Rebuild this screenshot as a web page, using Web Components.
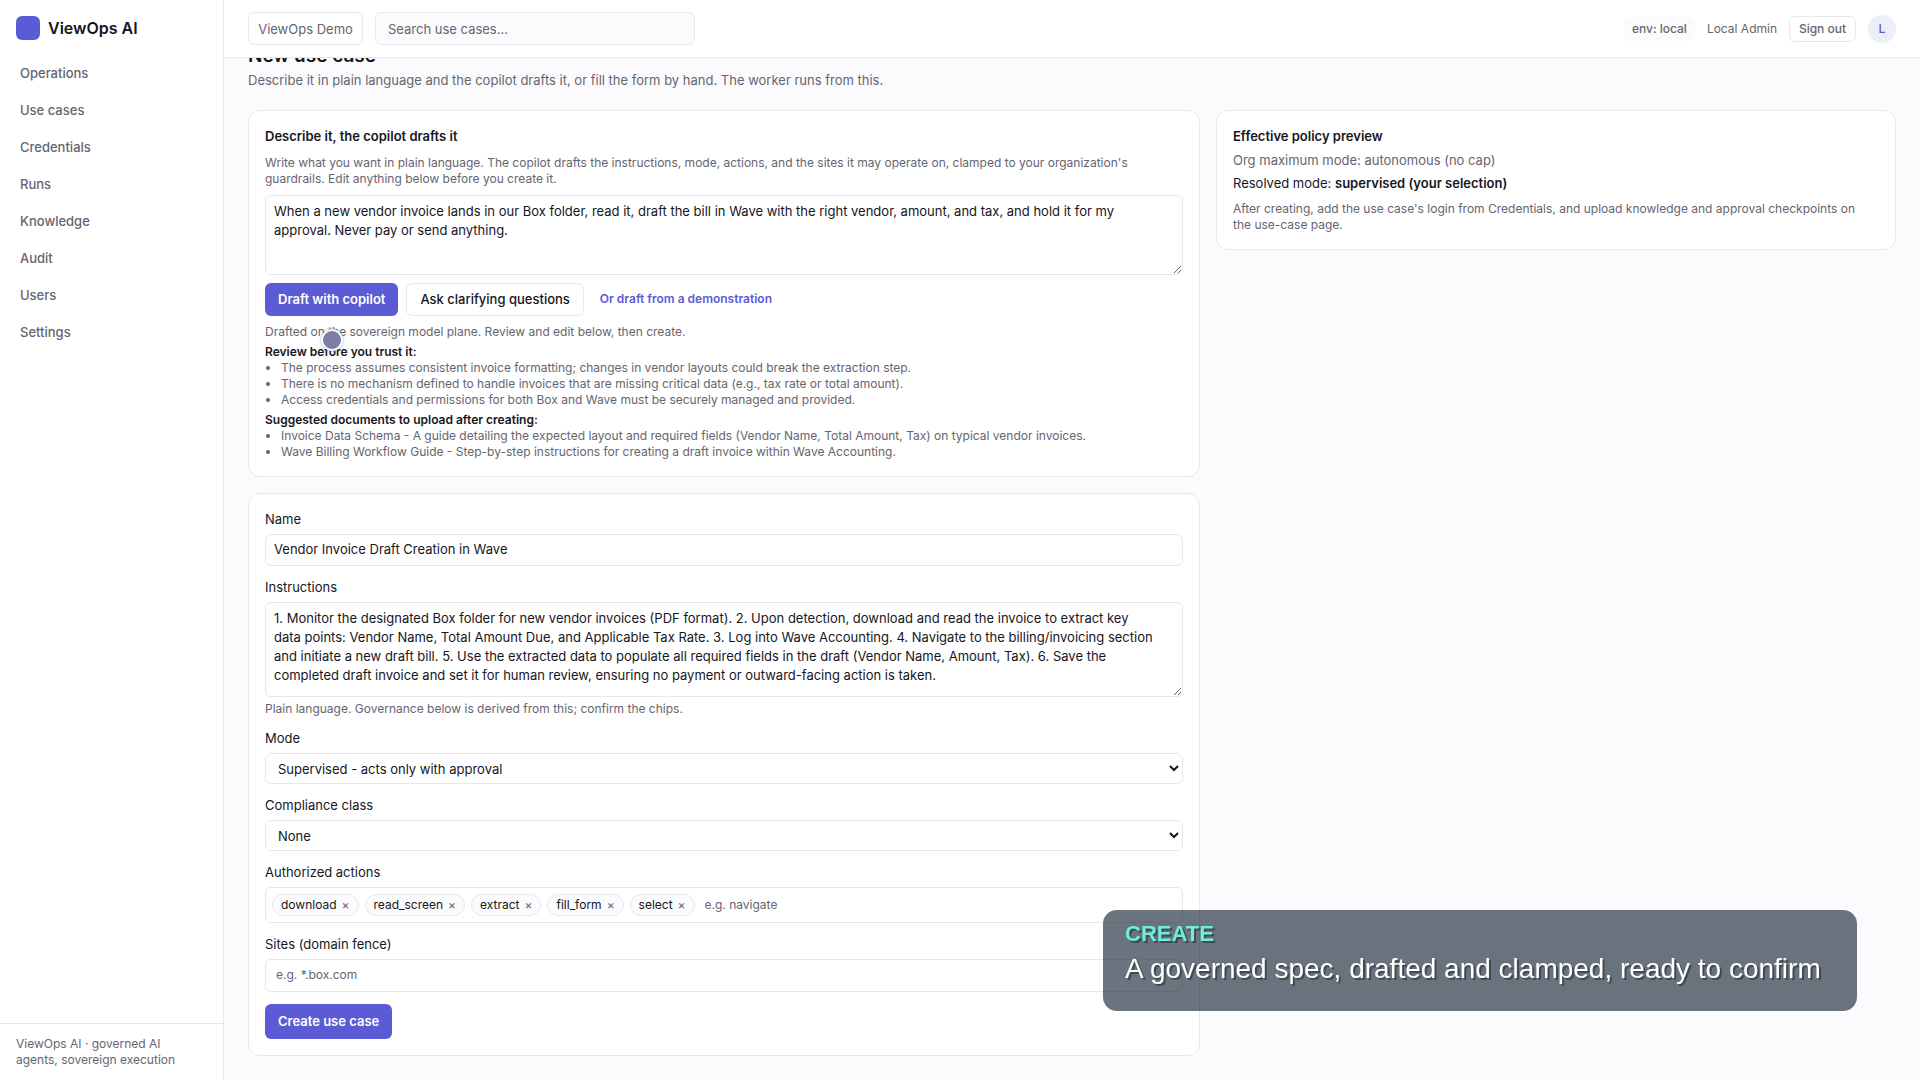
<!DOCTYPE html>
<html lang="en">
<head>
<meta charset="utf-8">
<title>ViewOps AI - New use case</title>
<style>
  :root {
    --accent: #5b5bd6;
    --accent-soft: #eeeefb;
    --ink: #16161d;
    --muted: #65656f;
    --line: #e8e8ec;
    --canvas: #fbfbfe;
    --surface: #ffffff;
    --field: 1px solid var(--line);
  }
  html, body { height: 100%; }
  body {
    margin: 0;
    font: 400 13px/20px Inter, "Liberation Sans", sans-serif;
    color: var(--ink);
    background: var(--canvas);
  }
</style>
</head>
<body>
<vo-shell>
  <vo-sidebar slot="sidebar"></vo-sidebar>
  <vo-topbar slot="topbar"></vo-topbar>
  <vo-page heading="New use case" summary="Describe it in plain language and the copilot drafts it, or fill the form by hand. The worker runs from this.">
    <vo-copilot-card></vo-copilot-card>
    <vo-card>
      <vo-stack>
        <vo-text-field label="Name" value="Vendor Invoice Draft Creation in Wave"></vo-text-field>
        <vo-text-field label="Instructions" multiline hint="Plain language. Governance below is derived from this; confirm the chips." value="1. Monitor the designated Box folder for new vendor invoices (PDF format). 2. Upon detection, download and read the invoice to extract key data points: Vendor Name, Total Amount Due, and Applicable Tax Rate. 3. Log into Wave Accounting. 4. Navigate to the billing/invoicing section and initiate a new draft bill. 5. Use the extracted data to populate all required fields in the draft (Vendor Name, Amount, Tax). 6. Save the completed draft invoice and set it for human review, ensuring no payment or outward-facing action is taken."></vo-text-field>
        <vo-select-field label="Mode" value="Supervised - acts only with approval"></vo-select-field>
        <vo-select-field label="Compliance class" value="None"></vo-select-field>
        <vo-chip-field label="Authorized actions" chips="download,read_screen,extract,fill_form,select" placeholder="e.g. navigate"></vo-chip-field>
        <vo-chip-field label="Sites (domain fence)" placeholder="e.g. *.box.com"></vo-chip-field>
        <vo-button primary large>Create use case</vo-button>
      </vo-stack>
    </vo-card>
    <vo-policy-card slot="aside"></vo-policy-card>
  </vo-page>
</vo-shell>
<vo-pointer></vo-pointer>
<vo-caption kicker="CREATE">A governed spec, drafted and clamped, ready to confirm</vo-caption>

<script>
const define = (name, render, after) => customElements.define(name, class extends HTMLElement {
  connectedCallback() {
    if (this.shadowRoot) return;
    const root = this.attachShadow({ mode: 'open' });
    const tpl = document.createElement('template');
    tpl.innerHTML = '<style>*{box-sizing:border-box}:host{display:block;box-sizing:border-box}</style>' + render(this);
    root.append(tpl.content.cloneNode(true));
    if (after) after(this, root);
  }
});

define('vo-shell', () => `
  <style>
    :host { display: grid; grid-template-columns: 224px minmax(0, 1fr); height: 100vh; }
    .column { display: flex; flex-direction: column; min-height: 0; }
    main { flex: 1; min-height: 0; overflow-y: auto; scrollbar-width: none; }
  </style>
  <slot name="sidebar"></slot>
  <div class="column">
    <slot name="topbar"></slot>
    <main><slot></slot></main>
  </div>`);

define('vo-sidebar', () => `
  <style>
    :host { display: flex; flex-direction: column; background: var(--surface); border-right: var(--field); }
    .brand { display: flex; align-items: center; gap: 8px; padding: 16px 16px 15px; font-size: 16px; line-height: 24px; font-weight: 600; }
    .mark { width: 24px; height: 24px; border-radius: 6px; background: var(--accent); }
    nav { flex: 1; display: flex; flex-direction: column; gap: 1px; padding: 0 8px; }
    a { display: block; padding: 8px 12px; border-radius: 8px; color: var(--muted); font-weight: 500; text-decoration: none; }
    footer { border-top: var(--field); padding: 12px 32px 12px 16px; font-size: 12px; line-height: 16px; color: var(--muted); }
  </style>
  <div class="brand"><span class="mark"></span><span>ViewOps AI</span></div>
  <nav>${['Operations', 'Use cases', 'Credentials', 'Runs', 'Knowledge', 'Audit', 'Users', 'Settings']
    .map(t => `<a href="#">${t}</a>`).join('')}</nav>
  <footer>ViewOps AI · governed AI agents, sovereign execution</footer>`);

define('vo-topbar', () => `
  <style>
    :host { display: flex; align-items: center; gap: 12px; padding: 12px 24px; background: var(--surface);
            border-bottom: var(--field); color: var(--muted); }
    .org, input { height: 33px; border: var(--field); border-radius: 6px; font: inherit; color: inherit; }
    .org { min-width: 115px; background: var(--surface); padding: 0 8px; }
    input { width: 320px; padding: 0 12px; background: var(--canvas); }
    input::placeholder { color: var(--muted); opacity: 1; }
    .side { margin-left: auto; display: flex; align-items: center; gap: 12px; font-size: 12px; line-height: 16px; }
    .env { padding: 4px 8px; border-radius: 6px; background: var(--canvas); font-weight: 500; }
    .out { height: 26px; min-width: 67px; padding: 0 8px; border: var(--field); border-radius: 6px; background: var(--surface);
           font: inherit; font-weight: 500; color: inherit; }
    .avatar { width: 28px; height: 28px; border-radius: 50%; display: grid; place-items: center;
              background: var(--accent-soft); color: var(--accent); font-weight: 500; }
  </style>
  <button class="org">ViewOps Demo</button>
  <input type="search" aria-label="Search" placeholder="Search use cases...">
  <div class="side">
    <span class="env">env: local</span><span>Local Admin</span>
    <button class="out">Sign out</button><span class="avatar">L</span>
  </div>`);

define('vo-page', host => `
  <style>
    :host { padding: 24px; }
    h1 { margin: 0 0 3px; font-size: 19px; line-height: 22px; font-weight: 600; }
    p { margin: 0 0 20px; color: var(--muted); }
    .grid { display: grid; grid-template-columns: minmax(0, 7fr) minmax(0, 5fr); gap: 16px; align-items: start; }
    .col { display: grid; gap: 16px; }
  </style>
  <h1>${host.getAttribute('heading')}</h1>
  <p>${host.getAttribute('summary')}</p>
  <div class="grid">
    <div class="col"><slot></slot></div>
    <slot name="aside"></slot>
  </div>`);

define('vo-card', () => `
  <style>:host { background: var(--surface); border: var(--field); border-radius: 12px; padding: 16px; }</style>
  <slot></slot>`);

define('vo-stack', () => `
  <style>:host { display: grid; gap: 12px; justify-items: stretch; }</style><slot></slot>`);

define('vo-button', host => `
  <style>
    :host { display: flex; }
    button { height: ${host.hasAttribute('large') ? 35 : 33}px; padding: 0 13px 2px; border: var(--field); border-radius: 6px;
             background: var(--surface); color: var(--ink); font: inherit; font-weight: 500; }
    :host([primary]) button { background: var(--accent); border: 0; color: #fff; font-weight: 600; }
  </style>
  <button type="button"><slot></slot></button>`);

const fieldStyles = `<style>
  :host { display: flex; flex-direction: column; gap: 4px; }
  label { line-height: 18px; padding-bottom: 2px; }
  input, textarea, select { width: 100%; border: var(--field); border-radius: 6px; background: var(--surface);
    color: var(--ink); font: inherit; }
  small { font-size: 12px; line-height: 16px; color: var(--muted); }
</style>`;

define('vo-text-field', host => `${fieldStyles}
  <style>
    input { height: 32px; padding: 0 8px 2px; }
    textarea { display: block; height: 95px; padding: 6px 26px 6px 8px; line-height: 19px; resize: vertical; }
  </style>
  <label for="c">${host.getAttribute('label')}</label>
  ${host.hasAttribute('multiline') ? '<textarea id="c"></textarea>' : '<input id="c" type="text">'}
  ${host.hasAttribute('hint') ? `<small>${host.getAttribute('hint')}</small>` : ''}`,
  (host, root) => { root.getElementById('c').value = host.getAttribute('value'); });

define('vo-select-field', host => `${fieldStyles}
  <style>select { height: 31px; padding: 0 8px; }</style>
  <label for="c">${host.getAttribute('label')}</label>
  <select id="c"><option>${host.getAttribute('value')}</option></select>`);

define('vo-chip-field', host => {
  const chips = (host.getAttribute('chips') || '').split(',').filter(Boolean);
  return `${fieldStyles}
  <style>
    .box { display: flex; align-items: center; gap: 6px; min-height: 33px; padding: 6px; border: var(--field); border-radius: 6px;
           font-size: 12px; line-height: 16px; }
    .chip { display: flex; align-items: center; gap: 5px; height: 22px; padding: 0 8px; border: var(--field);
            border-radius: 11px; background: var(--canvas); }
    .chip button { padding: 0; border: 0; background: none; font: inherit; color: var(--muted); }
    input { flex: 1; width: auto; min-width: 0; height: 18px; border: 0; padding: 0 4px 2px; background: none; }
    input::placeholder { color: var(--muted); opacity: 1; }
  </style>
  <label for="c">${host.getAttribute('label')}</label>
  <div class="box">
    ${chips.map(c => `<span class="chip">${c}<button type="button" aria-label="Remove ${c}">×</button></span>`).join('')}
    <input id="c" type="text" placeholder="${host.getAttribute('placeholder')}">
  </div>`;
});

define('vo-notes', host => `
  <style>
    :host { font-size: 12px; line-height: 16px; margin-top: 4px; }
    b { display: block; font-weight: 600; }
    ::slotted(ul) { margin: 0; padding-left: 16px; color: var(--muted); }
  </style>
  <b>${host.getAttribute('label')}</b><slot></slot>`);

define('vo-copilot-card', () => `
  <style>
    h2 { margin: 0 0 10px; font-size: 13px; line-height: 18px; font-weight: 600; }
    p { margin: 0; font-size: 12px; line-height: 16px; color: var(--muted); }
    textarea { display: block; width: 100%; height: 80px; margin: 8px 0; padding: 6px 8px; border: var(--field);
               border-radius: 6px; background: var(--surface); color: var(--ink); font: inherit; line-height: 19px; resize: vertical; }
    .actions { display: flex; align-items: center; gap: 8px; margin-bottom: 8px; }
    a { padding: 0 8px 2px; font-size: 12px; line-height: 16px; font-weight: 600; color: var(--accent); text-decoration: none; }
  </style>
  <vo-card>
    <h2 id="t">Describe it, the copilot drafts it</h2>
    <p>Write what you want in plain language. The copilot drafts the instructions, mode, actions, and the sites it may operate on, clamped to your organization's guardrails. Edit anything below before you create it.</p>
    <textarea aria-labelledby="t">When a new vendor invoice lands in our Box folder, read it, draft the bill in Wave with the right vendor, amount, and tax, and hold it for my approval. Never pay or send anything.</textarea>
    <div class="actions">
      <vo-button primary>Draft with copilot</vo-button>
      <vo-button>Ask clarifying questions</vo-button>
      <a href="#">Or draft from a demonstration</a>
    </div>
    <p>Drafted on the sovereign model plane. Review and edit below, then create.</p>
    <vo-notes label="Review before you trust it:"><ul>
      <li>The process assumes consistent invoice formatting; changes in vendor layouts could break the extraction step.</li>
      <li>There is no mechanism defined to handle invoices that are missing critical data (e.g., tax rate or total amount).</li>
      <li>Access credentials and permissions for both Box and Wave must be securely managed and provided.</li>
    </ul></vo-notes>
    <vo-notes label="Suggested documents to upload after creating:"><ul>
      <li>Invoice Data Schema - A guide detailing the expected layout and required fields (Vendor Name, Total Amount, Tax) on typical vendor invoices.</li>
      <li>Wave Billing Workflow Guide - Step-by-step instructions for creating a draft invoice within Wave Accounting.</li>
    </ul></vo-notes>
  </vo-card>`);

define('vo-policy-card', () => `
  <style>
    h2 { margin: 0 0 6px; font-size: 13px; line-height: 18px; font-weight: 600; }
    p { margin: 0 0 5px; line-height: 18px; }
    .muted { color: var(--muted); }
    b { font-weight: 600; }
    .note { margin: 9px 0 0; padding-right: 16px; font-size: 12px; line-height: 16px; }
  </style>
  <vo-card>
    <h2>Effective policy preview</h2>
    <p class="muted">Org maximum mode: autonomous (no cap)</p>
    <p>Resolved mode: <b>supervised (your selection)</b></p>
    <p class="muted note">After creating, add the use case's login from Credentials, and upload knowledge and approval checkpoints on the use-case page.</p>
  </vo-card>`);

define('vo-pointer', () => `
  <style>
    :host { position: fixed; left: 321px; top: 329px; width: 22px; height: 22px; border: 2px solid #f4f8fb; border-radius: 50%;
            background: #7e7da3; box-shadow: 0 0 3px rgba(60, 70, 90, .4); pointer-events: none; }
  </style>`);

define('vo-caption', host => `
  <style>
    :host { position: fixed; right: 63px; bottom: 69px; min-width: 754px; padding: 10px 22px 22px; border-radius: 14px;
            background: rgba(15, 31, 46, .62); color: #fff; font: 28px/40px "Liberation Sans", Arial, sans-serif;
            text-shadow: 2px 2px 0 rgba(40, 45, 50, .6); }
    strong { display: block; margin-bottom: 1px; font-size: 22px; line-height: 28px; color: #70ecdc; }
  </style>
  <strong>${host.getAttribute('kicker')}</strong><slot></slot>`);

// The form opens scrolled to its submit button.
const main = document.querySelector('vo-shell').shadowRoot.querySelector('main');
main.scrollTop = main.scrollHeight;
</script>
</body>
</html>
